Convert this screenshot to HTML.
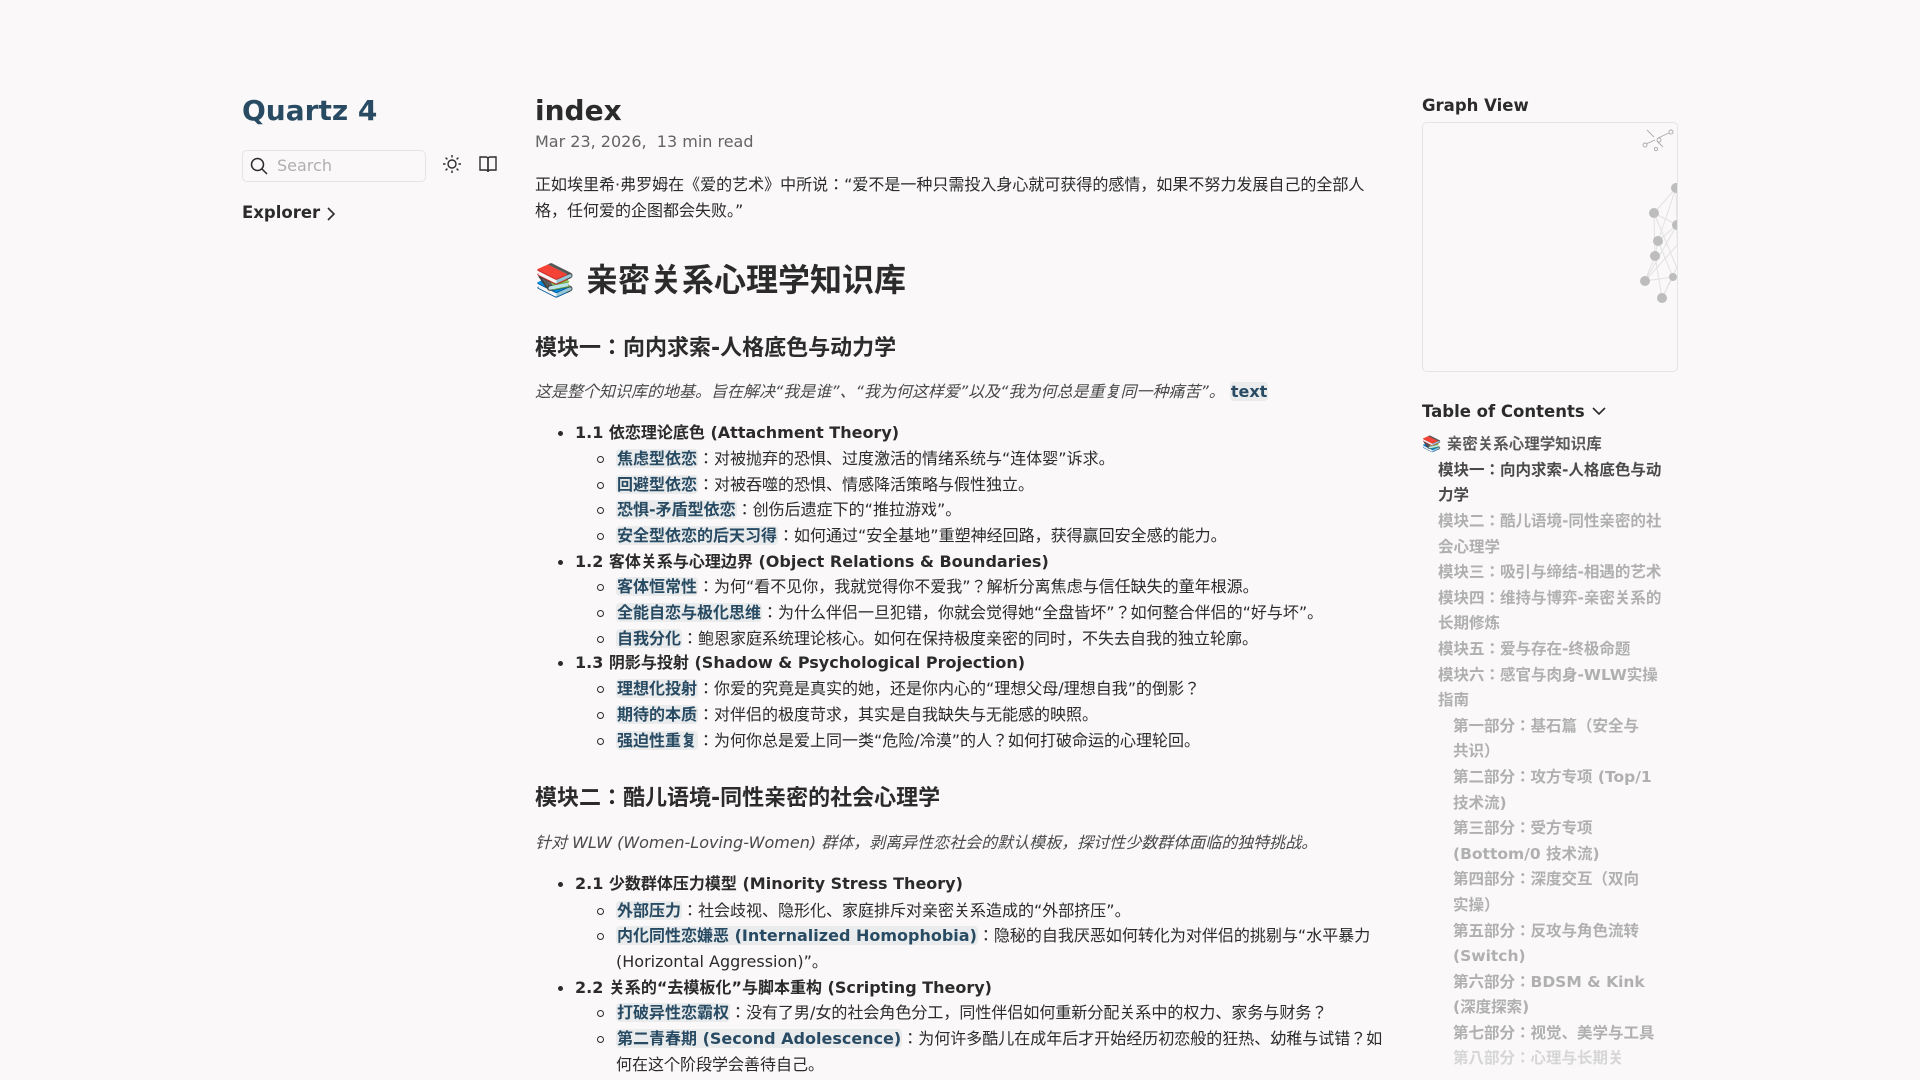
<!DOCTYPE html>
<html><head><meta charset="utf-8"><style>
*{margin:0;padding:0;box-sizing:border-box}
body{width:1920px;height:1080px;background:#faf8f8;font-family:"DejaVu Sans","Noto Sans CJK JP",sans-serif;color:#2b2b2b;overflow:hidden;position:relative;font-size:16px}
#w{position:absolute;left:0;top:0px;width:1920px;height:1080px}
.a{position:absolute;white-space:nowrap;line-height:25.6px}
.b{font-weight:700}
a.l{color:#284b63;font-weight:700;background:rgba(143,159,169,0.15);border-radius:4px;padding:0 1px;text-decoration:none;font-style:normal}
.d1,.d2{position:absolute;}
.d1{width:5px;height:5px;border-radius:50%;background:#2b2b2b}
.d2{width:7px;height:7px;border-radius:50%;border:1px solid #2b2b2b}
.t{position:absolute;font-weight:700;font-size:15.5px;line-height:25.6px;white-space:nowrap;color:#b0b0b0}
</style></head><body><div id="w">
<div class="a b" style="left:242px;top:94px;font-size:28px;line-height:34px;color:#284b63">Quartz 4</div>
<div style="position:absolute;left:242px;top:150px;width:184px;height:32px;border:1px solid #e5e5e5;border-radius:5px;background:#faf8f8"></div>
<svg style="position:absolute;left:250px;top:157px" width="18" height="18" viewBox="0 0 18 18"><circle cx="7.5" cy="7.5" r="6" fill="none" stroke="#2b2b2b" stroke-width="1.5"/><line x1="12" y1="12" x2="17" y2="17" stroke="#2b2b2b" stroke-width="1.5"/></svg>
<div class="a" style="left:277px;top:153px;font-size:16px;color:#b0b0b0">Search</div>
<svg style="position:absolute;left:442px;top:154px" width="20" height="20" viewBox="0 0 20 20" fill="none" stroke="#2b2b2b" stroke-width="1.4"><circle cx="10" cy="10" r="4"/><path d="M10 1v2.5M10 16.5V19M1 10h2.5M16.5 10H19M3.6 3.6l1.8 1.8M14.6 14.6l1.8 1.8M3.6 16.4l1.8-1.8M14.6 5.4l1.8-1.8"/></svg>
<svg style="position:absolute;left:478px;top:154px" width="20" height="20" viewBox="0 0 20 20" fill="none" stroke="#2b2b2b" stroke-width="1.4"><path d="M2 3h6a2 2 0 0 1 2 2v13a2 2 0 0 0-2-2H2z"/><path d="M18 3h-6a2 2 0 0 0-2 2v13a2 2 0 0 1 2-2h6z"/></svg>
<div class="a b" style="left:242px;top:200px;font-size:16.5px">Explorer</div>
<svg style="position:absolute;left:326px;top:206px" width="10" height="16" viewBox="0 0 10 16"><path d="M2 2l6 6-6 6" fill="none" stroke="#2b2b2b" stroke-width="1.6"/></svg>

<div class="a b" style="left:535px;top:94px;font-size:28px;line-height:34px">index</div>
<div class="a" style="left:535px;top:129px;color:#646464">Mar 23, 2026,&nbsp; 13 min read</div>
<div class="a" style="left:535px;top:172px">正如埃里希·弗罗姆在《爱的艺术》中所说：“爱不是一种只需投入身心就可获得的感情，如果不努力发展自己的全部人</div>
<div class="a" style="left:535px;top:198px">格，任何爱的企图都会失败。”</div>
<div class="a b" style="left:535px;top:260px;font-size:32px;line-height:40px">📚 亲密关系心理学知识库</div>
<div class="a b" style="left:535px;top:335px;font-size:22px;line-height:28px">模块一：向内求索-人格底色与动力学</div>
<div class="a" style="left:535px;top:379px;font-style:italic;color:#4a4a4a">这是整个知识库的地基。旨在解决“我是谁”、“我为何这样爱”以及“我为何总是重复同一种痛苦”。 <a class="l">text</a></div>

<div class="d1" style="left:558px;top:431px"></div><div class="a b" style="left:575px;top:420px">1.1 依恋理论底色 (Attachment Theory)</div>
<div class="d2" style="left:597px;top:456px"></div><div class="a" style="left:616px;top:446px"><a class="l">焦虑型依恋</a>：对被抛弃的恐惧、过度激活的情绪系统与“连体婴”诉求。</div>
<div class="d2" style="left:597px;top:482px"></div><div class="a" style="left:616px;top:472px"><a class="l">回避型依恋</a>：对被吞噬的恐惧、情感降活策略与假性独立。</div>
<div class="d2" style="left:597px;top:507px"></div><div class="a" style="left:616px;top:497px"><a class="l">恐惧-矛盾型依恋</a>：创伤后遗症下的“推拉游戏”。</div>
<div class="d2" style="left:597px;top:533px"></div><div class="a" style="left:616px;top:523px"><a class="l">安全型依恋的后天习得</a>：如何通过“安全基地”重塑神经回路，获得赢回安全感的能力。</div>
<div class="d1" style="left:558px;top:560px"></div><div class="a b" style="left:575px;top:549px">1.2 客体关系与心理边界 (Object Relations &amp; Boundaries)</div>
<div class="d2" style="left:597px;top:584px"></div><div class="a" style="left:616px;top:574px"><a class="l">客体恒常性</a>：为何“看不见你，我就觉得你不爱我”？解析分离焦虑与信任缺失的童年根源。</div>
<div class="d2" style="left:597px;top:610px"></div><div class="a" style="left:616px;top:600px"><a class="l">全能自恋与极化思维</a>：为什么伴侣一旦犯错，你就会觉得她“全盘皆坏”？如何整合伴侣的“好与坏”。</div>
<div class="d2" style="left:597px;top:636px"></div><div class="a" style="left:616px;top:626px"><a class="l">自我分化</a>：鲍恩家庭系统理论核心。如何在保持极度亲密的同时，不失去自我的独立轮廓。</div>
<div class="d1" style="left:558px;top:661px"></div><div class="a b" style="left:575px;top:650px">1.3 阴影与投射 (Shadow &amp; Psychological Projection)</div>
<div class="d2" style="left:597px;top:686px"></div><div class="a" style="left:616px;top:676px"><a class="l">理想化投射</a>：你爱的究竟是真实的她，还是你内心的“理想父母/理想自我”的倒影？</div>
<div class="d2" style="left:597px;top:712px"></div><div class="a" style="left:616px;top:702px"><a class="l">期待的本质</a>：对伴侣的极度苛求，其实是自我缺失与无能感的映照。</div>
<div class="d2" style="left:597px;top:738px"></div><div class="a" style="left:616px;top:728px"><a class="l">强迫性重复</a>：为何你总是爱上同一类“危险/冷漠”的人？如何打破命运的心理轮回。</div>

<div class="a b" style="left:535px;top:785px;font-size:22px;line-height:28px">模块二：酷儿语境-同性亲密的社会心理学</div>
<div class="a" style="left:535px;top:830px;font-style:italic;color:#4a4a4a">针对 WLW (Women-Loving-Women) 群体，剥离异性恋社会的默认模板，探讨性少数群体面临的独特挑战。</div>
<div class="d1" style="left:558px;top:882px"></div><div class="a b" style="left:575px;top:871px">2.1 少数群体压力模型 (Minority Stress Theory)</div>
<div class="d2" style="left:597px;top:908px"></div><div class="a" style="left:616px;top:898px"><a class="l">外部压力</a>：社会歧视、隐形化、家庭排斥对亲密关系造成的“外部挤压”。</div>
<div class="d2" style="left:597px;top:933px"></div><div class="a" style="left:616px;top:923px"><a class="l">内化同性恋嫌恶 (Internalized Homophobia)</a>：隐秘的自我厌恶如何转化为对伴侣的挑剔与“水平暴力</div>
<div class="a" style="left:616px;top:949px">(Horizontal Aggression)”。</div>
<div class="d1" style="left:558px;top:986px"></div><div class="a b" style="left:575px;top:975px">2.2 关系的“去模板化”与脚本重构 (Scripting Theory)</div>
<div class="d2" style="left:597px;top:1010px"></div><div class="a" style="left:616px;top:1000px"><a class="l">打破异性恋霸权</a>：没有了男/女的社会角色分工，同性伴侣如何重新分配关系中的权力、家务与财务？</div>
<div class="d2" style="left:597px;top:1036px"></div><div class="a" style="left:616px;top:1026px"><a class="l">第二青春期 (Second Adolescence)</a>：为何许多酷儿在成年后才开始经历初恋般的狂热、幼稚与试错？如</div>
<div class="a" style="left:616px;top:1052px">何在这个阶段学会善待自己。</div>

<div class="a b" style="left:1422px;top:93px;font-size:16.5px">Graph View</div>
<div style="position:absolute;left:1422px;top:122px;width:256px;height:250px;border:1px solid #e5e5e5;border-radius:5px;overflow:hidden">
<svg width="256" height="250" style="position:absolute;left:0;top:0">
<g stroke="#e2e2e2" stroke-width="1" fill="none">
<path d="M253 65L231 90L254 102L235 118L232 133L222 158L250 154L239 175M253 65L235 118M231 90L232 133M254 102L222 158M235 118L250 154M232 133L239 175M231 90L256 150M222 158L256 120M239 175L256 140M253 65L256 190"/></g>
<g fill="#bdbdbd"><circle cx="253" cy="65" r="5"/><circle cx="231" cy="90" r="5"/><circle cx="254" cy="102" r="5"/><circle cx="235" cy="118" r="5"/><circle cx="232" cy="133" r="5"/><circle cx="222" cy="158" r="5"/><circle cx="250" cy="154" r="4"/><circle cx="239" cy="175" r="5"/></g>
<g stroke="#aaa" fill="none" stroke-width="0.9" transform="translate(14,0)"><circle cx="222" cy="17" r="2"/><circle cx="234" cy="9" r="2"/><circle cx="208" cy="22" r="2"/><circle cx="219" cy="26" r="1.6"/><path d="M210 7L217 14M221 15L232 10M218 17L209 21M220 18L226 24"/></g>
</svg></div>

<div class="a b" style="left:1422px;top:399px;font-size:16.5px">Table of Contents</div>
<svg style="position:absolute;left:1591px;top:405px" width="16" height="12" viewBox="0 0 16 12"><path d="M2 3l6 6 6-6" fill="none" stroke="#2b2b2b" stroke-width="1.6"/></svg>
<div class="t" style="left:1422px;top:432px;color:#5a5a5a">📚 亲密关系心理学知识库</div>
<div class="t" style="left:1438px;top:458px;color:#4a4a4a">模块一：向内求索-人格底色与动</div>
<div class="t" style="left:1438px;top:483px;color:#4a4a4a">力学</div>
<div class="t" style="left:1438px;top:509px">模块二：酷儿语境-同性亲密的社</div>
<div class="t" style="left:1438px;top:535px">会心理学</div>
<div class="t" style="left:1438px;top:560px">模块三：吸引与缔结-相遇的艺术</div>
<div class="t" style="left:1438px;top:586px">模块四：维持与博弈-亲密关系的</div>
<div class="t" style="left:1438px;top:611px">长期修炼</div>
<div class="t" style="left:1438px;top:637px">模块五：爱与存在-终极命题</div>
<div class="t" style="left:1438px;top:663px">模块六：感官与肉身-WLW实操</div>
<div class="t" style="left:1438px;top:688px">指南</div>
<div class="t" style="left:1453px;top:714px">第一部分：基石篇（安全与</div>
<div class="t" style="left:1453px;top:739px">共识）</div>
<div class="t" style="left:1453px;top:765px">第二部分：攻方专项 (Top/1</div>
<div class="t" style="left:1453px;top:791px">技术流)</div>
<div class="t" style="left:1453px;top:816px">第三部分：受方专项</div>
<div class="t" style="left:1453px;top:842px">(Bottom/0 技术流)</div>
<div class="t" style="left:1453px;top:867px">第四部分：深度交互（双向</div>
<div class="t" style="left:1453px;top:893px">实操）</div>
<div class="t" style="left:1453px;top:919px">第五部分：反攻与角色流转</div>
<div class="t" style="left:1453px;top:944px">(Switch)</div>
<div class="t" style="left:1453px;top:970px">第六部分：BDSM &amp; Kink</div>
<div class="t" style="left:1453px;top:995px">(深度探索)</div>
<div class="t" style="left:1453px;top:1021px">第七部分：视觉、美学与工具</div>
<div class="t" style="left:1453px;top:1046px;color:#d6d6d6">第八部分：心理与长期关</div>
</div></body></html>
